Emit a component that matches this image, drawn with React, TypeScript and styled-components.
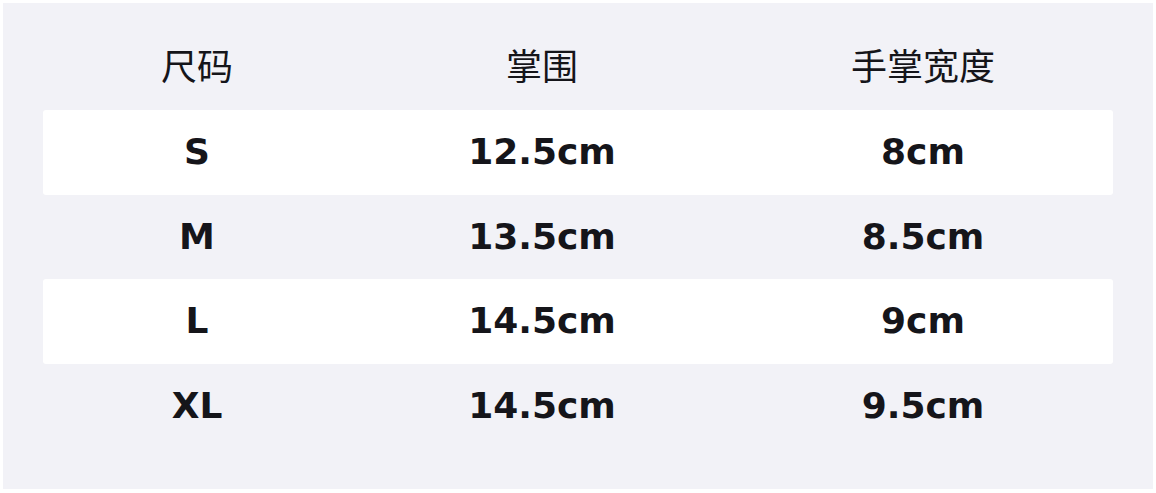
import React from "react";
import styled, { createGlobalStyle } from "styled-components";

const Global = createGlobalStyle`
  html, body { margin: 0; padding: 0; background: #ffffff; }
  body { font-family: "DejaVu Sans", "Noto Sans CJK SC", sans-serif; }
`;

const Page = styled.div`
  padding: 3px;
  width: 1150px;
`;

const Panel = styled.div`
  background: #f2f2f7;
  height: 486px;
  box-sizing: border-box;
  padding: 22px 40px 0;
`;

const Row = styled.div<{ $white?: boolean; $head?: boolean }>`
  display: grid;
  grid-template-columns: 308px 382px 1fr;
  height: ${(p) => (p.$head ? "85px" : "84.5px")};
  align-items: center;
  background: ${(p) => (p.$white ? "#ffffff" : "transparent")};
  border-radius: 3px;
`;

const Cell = styled.div<{ $head?: boolean }>`
  text-align: center;
  color: #15151a;
  font-size: 36px;
  font-weight: ${(p) => (p.$head ? 400 : 700)};
  font-family: ${(p) =>
    p.$head
      ? '"Noto Sans CJK SC", sans-serif'
      : '"DejaVu Sans", "Noto Sans CJK SC", sans-serif'};
  line-height: 1;
  padding-bottom: ${(p) => (p.$head ? "7px" : "0")};
`;

const data = [
  ["S", "12.5cm", "8cm"],
  ["M", "13.5cm", "8.5cm"],
  ["L", "14.5cm", "9cm"],
  ["XL", "14.5cm", "9.5cm"],
];

export default function App() {
  return (
    <>
      <Global />
      <Page>
        <Panel>
          <Row $head>
            <Cell $head>尺码</Cell>
            <Cell $head>掌围</Cell>
            <Cell $head>手掌宽度</Cell>
          </Row>
          {data.map((r, i) => (
            <Row key={r[0]} $white={i % 2 === 0}>
              {r.map((c, j) => (
                <Cell key={j}>{c}</Cell>
              ))}
            </Row>
          ))}
        </Panel>
      </Page>
    </>
  );
}
